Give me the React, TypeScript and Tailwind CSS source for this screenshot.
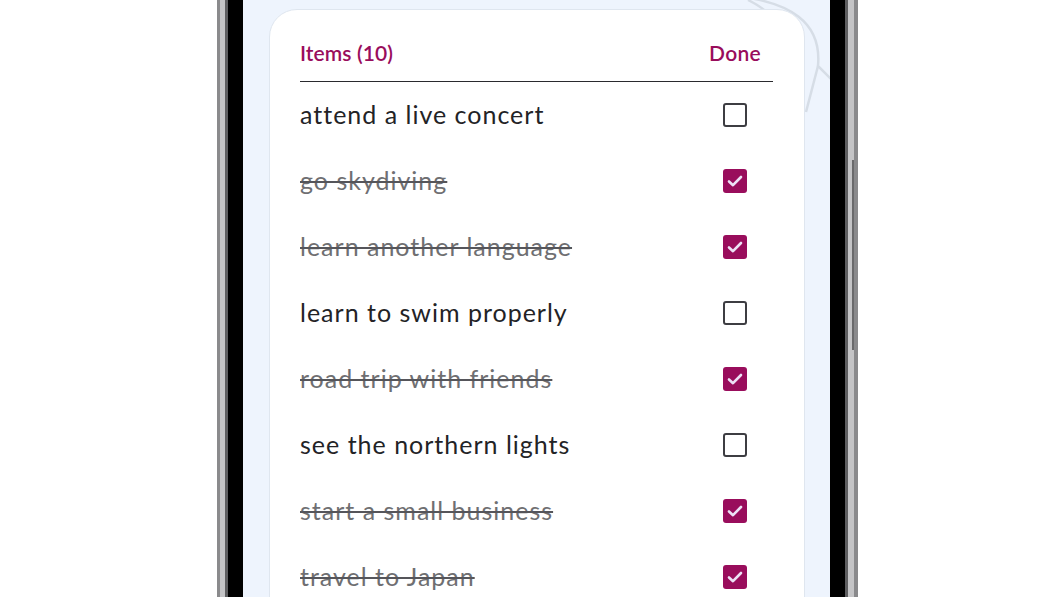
import React from 'react';

interface Item {
    label: string;
    done: boolean;
}

const items: Item[] = [
    { label: 'attend a live concert', done: false },
    { label: 'go skydiving', done: true },
    { label: 'learn another language', done: true },
    { label: 'learn to swim properly', done: false },
    { label: 'road trip with friends', done: true },
    { label: 'see the northern lights', done: false },
    { label: 'start a small business', done: true },
    { label: 'travel to Japan', done: true },
];

function Checkbox({ checked }: { checked: boolean }) {
    if (checked) {
        return (
            <div className="w-[24px] h-[24px] rounded-[3px] bg-[#990d5c] flex items-center justify-center">
                <svg width="24" height="24" viewBox="0 0 24 24" fill="none">
                    <path d="M6 12.5 L10 16.2 L18 8" stroke="#ece1f6" strokeWidth="2.6" strokeLinecap="round" strokeLinejoin="round" />
                </svg>
            </div>
        );
    }
    return <div className="w-[24px] h-[24px] rounded-[3px] border-[2.5px] border-[#3d3d42] bg-white" />;
}

export default function App() {
    return (
        <div className="w-[1057px] h-[597px] bg-white overflow-hidden flex" style={{ fontFamily: 'Lato, "Noto Sans", sans-serif' }}>
            {/* phone body */}
            <div className="ml-[217px] w-[641px] h-full flex bg-[#a9a9ab]">
                <div className="w-[3px] bg-[#8a8a8c]" />
                <div className="w-[5px] bg-[#c4c4c6]" />
                <div className="w-[3px] bg-[#5e5e60]" />
                <div className="flex-1 flex bg-black px-[15px]">
                    {/* screen */}
                    <div className="relative flex-1 bg-[#eef4fd] pl-[26px] pr-[25px] pt-[9px] overflow-hidden">
                        <svg className="absolute inset-0" width="587" height="597" viewBox="243 0 587 597" fill="none">
                            <path d="M735 -4 C790 2 822 22 818 66 L834 82" stroke="#d6dde6" strokeWidth="2.5" />
                            <path d="M818 66 L806 112" stroke="#d6dde6" strokeWidth="2.5" />
                            <path d="M748 0 C760 6 770 12 780 30" stroke="#d6dde6" strokeWidth="2.5" />
                        </svg>
                        <div className="relative h-[700px] bg-white rounded-[28px] border border-[#dfe6ef] pl-[30px] pr-[31px]">
                            <div className="flex items-center justify-between pt-[29px] pb-[14px] border-b-[1.5px] border-[#2a2a2e]">
                                <span className="text-[21px] leading-[28px] font-semibold text-[#990d5c] tracking-[0.1px]">Items (10)</span>
                                <span className="w-[54px] mr-[11px] text-center text-[21px] leading-[28px] font-semibold text-[#990d5c] tracking-[0.3px]">Done</span>
                            </div>
                            {items.map((it) => (
                                <div key={it.label} className="h-[66px] flex items-center justify-between">
                                    <span
                                        className={
                                            it.done
                                                ? 'text-[25px] tracking-[1px] text-[#6f6f72] line-through decoration-[1.5px] decoration-[#55555a]'
                                                : 'text-[25px] tracking-[1px] text-[#232326]'
                                        }
                                    >
                                        {it.label}
                                    </span>
                                    <div className="w-[54px] mr-[11px] flex justify-center">
                                        <Checkbox checked={it.done} />
                                    </div>
                                </div>
                            ))}
                        </div>
                    </div>
                </div>
                <div className="w-[3px] bg-[#5e5e60]" />
                <div className="w-[6px] bg-[#c4c4c6] flex flex-col">
                    <div className="h-[90px]" />
                    <div className="h-[70px]" />
                    <div className="h-[190px] border-r-[2px] border-[#6a6a6c]" />
                </div>
                <div className="w-[4px] bg-[#8a8a8c]" />
            </div>
        </div>
    );
}
